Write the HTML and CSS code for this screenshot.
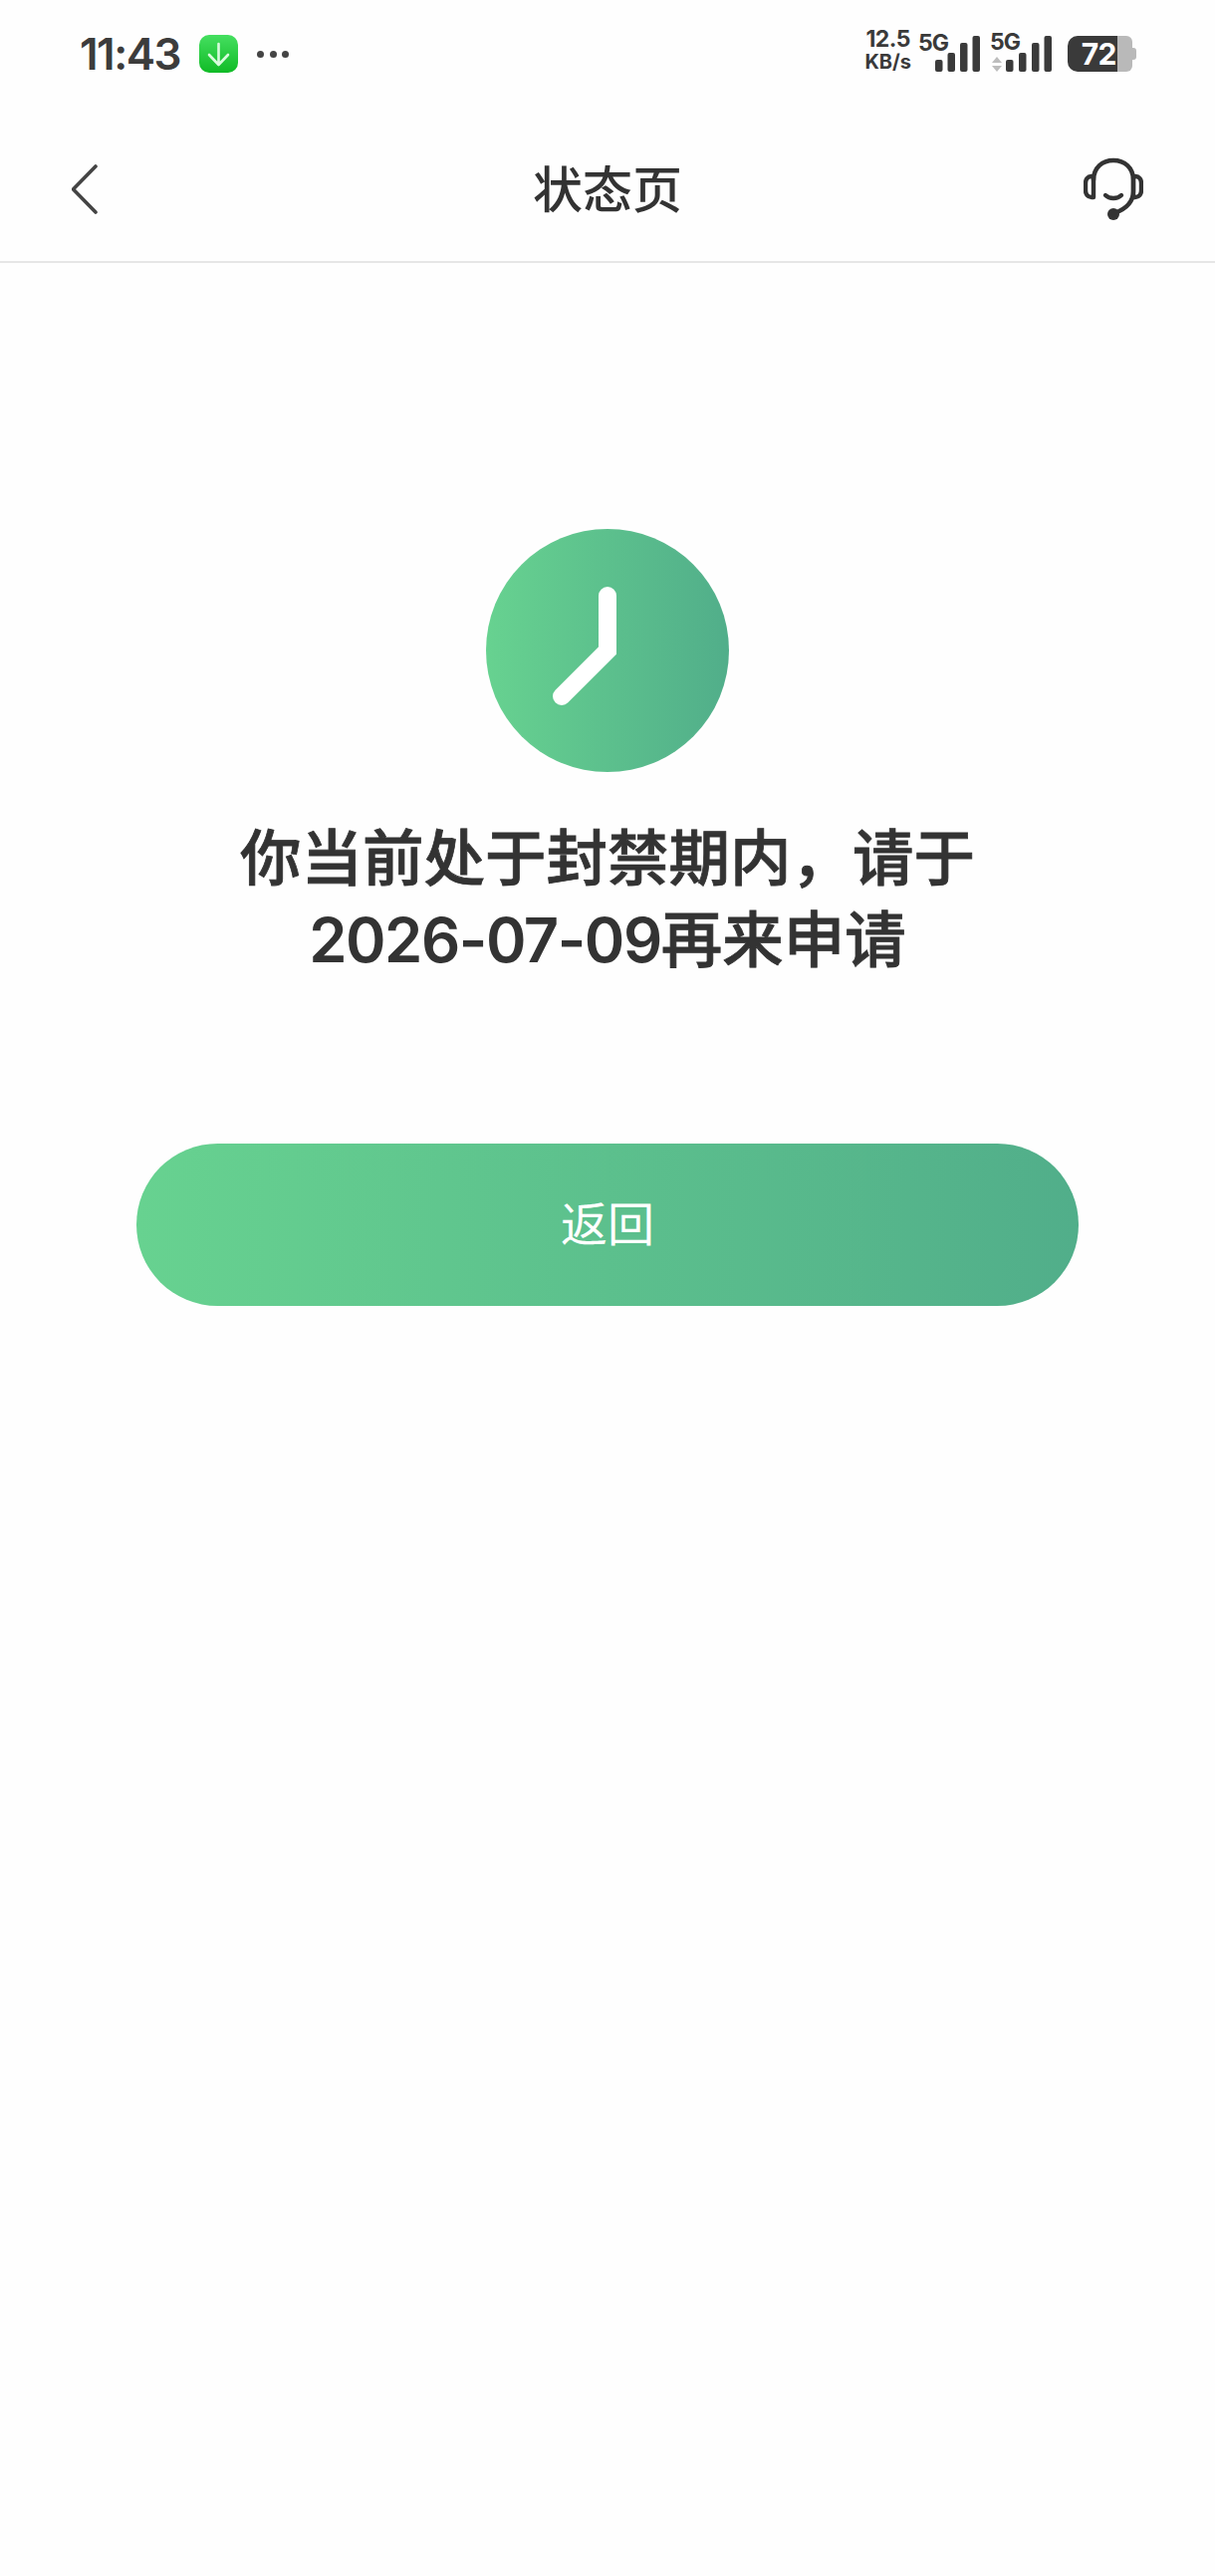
FILE: index.html
```html
<!DOCTYPE html>
<html lang="zh-CN">
<head>
    <meta charset="UTF-8">
    <meta name="viewport" content="width=device-width, initial-scale=1.0">
    <title>状态页</title>
    <link rel="stylesheet" href="styles.css">
</head>
<body>
    <div class="statusbar">
        <div class="status-left">
            <span class="time">11:43</span>
            <svg class="app-icon" width="39" height="38" viewBox="0 0 39 38">
                <defs>
                    <linearGradient id="appGreen" x1="0" y1="0" x2="0" y2="1">
                        <stop offset="0" stop-color="#45df60"/>
                        <stop offset="1" stop-color="#10bb26"/>
                    </linearGradient>
                </defs>
                <rect width="39" height="38" rx="10" fill="url(#appGreen)"/>
                <path d="M19.5 9V29M10 20L19.5 30L29 20" fill="none" stroke="#d9fbdd" stroke-width="2.6" stroke-linecap="round" stroke-linejoin="round"/>
            </svg>
            <div class="dots"><i></i><i></i><i></i></div>
        </div>
        <div class="status-right">
            <div class="speed"><span>12.5</span><span class="unit">KB/s</span></div>
            <div class="sim sim-one">
                <span class="net">5G</span>
                <svg class="bars" width="45" height="36" viewBox="0 0 45 36">
                    <rect x="0" y="24" width="7.5" height="12" rx="2"/>
                    <rect x="12.5" y="17" width="7.5" height="19" rx="2"/>
                    <rect x="25" y="7" width="7.5" height="29" rx="2"/>
                    <rect x="37.5" y="0" width="7.5" height="36" rx="2"/>
                </svg>
            </div>
            <div class="sim sim-two">
                <div class="net-stack">
                    <span class="net">5G</span>
                    <svg width="10" height="15" viewBox="0 0 10 15">
                        <path d="M5 0L10 6H0ZM0 9H10L5 15Z" fill="#bdbdbd"/>
                    </svg>
                </div>
                <svg class="bars" width="46" height="36" viewBox="0 0 46 36">
                    <rect x="0" y="24" width="7.5" height="12" rx="2"/>
                    <rect x="13" y="17" width="7.5" height="19" rx="2"/>
                    <rect x="26" y="7" width="7.5" height="29" rx="2"/>
                    <rect x="38.5" y="0" width="7.5" height="36" rx="2"/>
                </svg>
            </div>
            <div class="battery">
                <div class="battery-level">72</div>
                <div class="battery-rest"></div>
                <div class="battery-nub"></div>
            </div>
        </div>
    </div>

    <div class="navbar">
        <svg class="nav-icon" width="60" height="60" viewBox="0 0 60 60">
            <path d="M24 7L1.5 30L24 53" fill="none" stroke="#444" stroke-width="3.6" stroke-linecap="round" stroke-linejoin="round"/>
        </svg>
        <h1>状态页</h1>
        <svg class="nav-icon" width="60" height="64" viewBox="0 0 60 64">
            <path d="M10 23C10 10 19 3 30 3C41 3 50 10 50 23V34C50 46 42 52 31 56" fill="none" stroke="#333" stroke-width="4.400" stroke-linecap="round"/>
            <path d="M10 19H8C4 19 2 22 2 26V33C2 37 4 40 8 40H10ZM50 19H52C56 19 58 22 58 26V33C58 37 56 40 52 40H50Z" fill="none" stroke="#333" stroke-width="4.400" stroke-linejoin="round"/>
            <path d="M22 38C26 42 34 42 38 38" fill="none" stroke="#333" stroke-width="4.400" stroke-linecap="round"/>
            <circle cx="30" cy="57" r="6" fill="#333"/>
        </svg>
    </div>

    <div class="content">
        <svg class="clock" width="244" height="244" viewBox="0 0 244 244">
            <defs>
                <linearGradient id="clockGreen" x1="0" y1="0" x2="1" y2="0">
                    <stop offset="0" stop-color="#67d290"/>
                    <stop offset="1" stop-color="#51ae8a"/>
                </linearGradient>
            </defs>
            <circle cx="122" cy="122" r="122" fill="url(#clockGreen)"/>
            <path d="M122 67V122L76 168" fill="none" stroke="#fff" stroke-width="18" stroke-linecap="round" stroke-linejoin="miter"/>
        </svg>
        <p class="message">你当前处于封禁期内，请于<br><span class="date">2026-07-09</span>再来申请</p>
        <a class="back-button" href="#">返回</a>
    </div>
</body>
</html>
```

FILE: styles.css
```css
body {
    margin: 0;
    padding: 0;
    background-color: #fefefe;
    color: #333;
    font-family: Inter, "Noto Sans CJK SC", sans-serif;
}

/* status bar */
.statusbar {
    height: 108px;
    display: flex;
    justify-content: space-between;
    align-items: center;
    padding: 0 79px 0 80px;
}
.status-left {
    display: flex;
    align-items: center;
}
.time {
    font-size: 44px;
    font-weight: 600;
    letter-spacing: -1.5px;
    color: #3c3c3c;
    line-height: 54px;
}
.app-icon {
    margin-left: 19px;
}
.dots {
    display: flex;
    gap: 5.5px;
    margin-left: 19px;
}
.dots i {
    width: 7px;
    height: 7px;
    border-radius: 50%;
    background-color: #444;
}
.status-right {
    display: flex;
    align-items: flex-end;
    height: 40px;
    margin-top: -4px;
    color: #3a3a3a;
    font-weight: 700;
}
.speed {
    display: flex;
    flex-direction: column;
    align-items: center;
    font-size: 23px;
    line-height: 25px;
    letter-spacing: -0.5px;
    padding-top: 2px;
}
.speed .unit {
    font-size: 20px;
    line-height: 20px;
    letter-spacing: 0;
}
.sim {
    position: relative;
    display: flex;
    align-items: flex-end;
}
.sim-one {
    margin-left: 7px;
}
.sim-one .net {
    position: absolute;
    left: 0;
    top: -3px;
}
.sim-one .bars {
    margin-left: 17px;
}
.sim-two {
    margin-left: 10px;
}
.net {
    font-size: 23px;
    line-height: 20px;
    letter-spacing: -1px;
}
.net-stack {
    display: flex;
    flex-direction: column;
    align-items: flex-start;
    width: 16px;
    height: 40px;
    gap: 5px;
}
.net-stack svg {
    margin-left: 2px;
}
.bars {
    fill: #3a3a3a;
    display: block;
}
.battery {
    display: flex;
    align-items: center;
    height: 36px;
    margin-left: 16px;
}
.battery-level {
    width: 50px;
    height: 36px;
    box-sizing: border-box;
    padding-right: 1px;
    border-radius: 10px 0 0 10px;
    background-color: #3a3a3a;
    color: #fff;
    font-size: 30px;
    line-height: 36px;
    text-align: right;
    letter-spacing: -0.5px;
}
.battery-rest {
    width: 15px;
    height: 36px;
    border-radius: 0 6px 6px 0;
    background-color: #b9b9b9;
}
.battery-nub {
    width: 4px;
    height: 12px;
    border-radius: 0 3px 3px 0;
    background-color: #b9b9b9;
}

/* title bar */
.navbar {
    height: 144px;
    margin-top: 10px;
    padding: 0 72px;
    display: flex;
    justify-content: space-between;
    align-items: center;
    border-bottom: 2px solid #e6e6e6;
}
.navbar h1 {
    margin: 0 0 6px;
    font-size: 50px;
    font-weight: 500;
    color: #333;
}
.nav-icon {
    display: block;
}

/* main */
.content {
    display: flex;
    flex-direction: column;
    align-items: center;
    padding-top: 267px;
}
.clock {
    display: block;
}
.message {
    margin: 46px 0 0;
    font-size: 61.500px;
    font-weight: 500;
    -webkit-text-stroke: 0.8px #333;
    line-height: 82px;
    text-align: center;
    color: #333;
}
.date {
    font-weight: 600;
    letter-spacing: -1.5px;
    -webkit-text-stroke: 0;
}
.back-button {
    margin-top: 163px;
    width: 946px;
    height: 163px;
    box-sizing: border-box;
    padding-bottom: 9px;
    display: flex;
    justify-content: center;
    align-items: center;
    border-radius: 82px;
    background: linear-gradient(90deg, #67d290, #51ae8a);
    color: #fff;
    font-size: 47px;
    text-decoration: none;
}
```
